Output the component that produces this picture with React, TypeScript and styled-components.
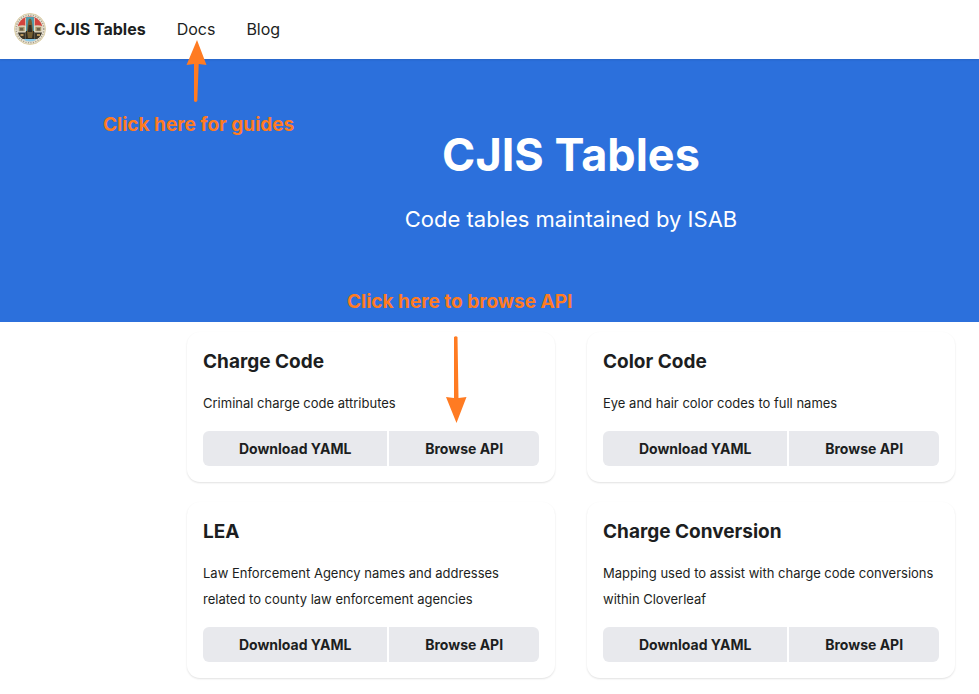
import React from "react";
import styled, { createGlobalStyle } from "styled-components";

const GlobalStyle = createGlobalStyle`
  *, *::before, *::after { box-sizing: border-box; }
  body {
    margin: 0;
    background: #fff;
    color: #1c1e21;
    font-family: Inter, "Liberation Sans", sans-serif;
    font-size: 16px;
  }
`;

const Navbar = styled.nav`
  position: relative;
  z-index: 1;
  display: flex;
  align-items: center;
  gap: 31px;
  height: 59px;
  padding: 0 14px 2px;
  background: #fff;
  box-shadow: 0 1px 2px rgba(0, 0, 0, 0.1);
`;

const Brand = styled.a`
  display: flex;
  align-items: center;
  gap: 8px;
  color: inherit;
  font-weight: 700;
  text-decoration: none;
`;

const NavLink = styled.a`
  color: inherit;
  text-decoration: none;
`;

const Hero = styled.header`
  position: relative;
  padding: 64px 0 87px 163px;
  background: #2c70dc;
  color: #fff;
  text-align: center;
`;

const HeroTitle = styled.h1`
  margin: 0 0 17px;
  font-size: 45px;
  font-weight: 700;
  line-height: 64px;
`;

const HeroSubtitle = styled.p`
  margin: 0;
  font-size: 22px;
  line-height: 31px;
`;

const Note = styled.span<{ $x: number; $y: number }>`
  position: absolute;
  left: ${(p) => p.$x}px;
  top: ${(p) => p.$y}px;
  color: #ff7b22;
  font-size: 19px;
  font-weight: 700;
  line-height: 24px;
  white-space: nowrap;
`;

const Arrow = styled.svg<{ $x: number; $y: number }>`
  position: absolute;
  left: ${(p) => p.$x}px;
  top: ${(p) => p.$y}px;
  fill: #ff7b22;
  pointer-events: none;
`;

const Tables = styled.main`
  position: relative;
  display: grid;
  grid-template-columns: 1fr 1fr;
  gap: 20px 32px;
  padding: 10px 24px 16px 187px;
`;

const Card = styled.article`
  padding: 16px;
  border-radius: 13px;
  background: #fff;
  box-shadow: 0 1px 2px rgba(0, 0, 0, 0.12);
`;

const CardTitle = styled.h3`
  margin: 0 0 14px;
  font-size: 19px;
  font-weight: 700;
  line-height: 28px;
`;

const CardText = styled.p`
  margin: 0 0 15px;
  font-size: 13px;
  line-height: 26px;
`;

const ButtonGroup = styled.div`
  display: flex;
  gap: 2px;
  border-radius: 6px;
  overflow: hidden;
`;

const Button = styled.button`
  flex: 1 1 auto;
  height: 35px;
  padding: 0;
  border: 0;
  background: #e8e9ed;
  color: inherit;
  font: 700 14px Inter, "Liberation Sans", sans-serif;
  cursor: pointer;
`;

const tables = [
  { title: "Charge Code", text: "Criminal charge code attributes" },
  { title: "Color Code", text: "Eye and hair color codes to full names" },
  { title: "LEA", text: "Law Enforcement Agency names and addresses related to county law enforcement agencies" },
  { title: "Charge Conversion", text: "Mapping used to assist with charge code conversions within Cloverleaf" },
];

const Seal = () => (
  <svg width="32" height="32" viewBox="0 0 32 32" aria-hidden="true">
    <defs>
      <clipPath id="seal-inner">
        <circle cx="16" cy="16" r="12.5" />
      </clipPath>
    </defs>
    <circle cx="16" cy="16" r="15.5" fill="#e9e3d3" stroke="#ddd0a8" />
    <circle cx="16" cy="16" r="13.8" fill="none" stroke="#857e70" strokeWidth="1.4" strokeDasharray="1.1 1.4" opacity="0.7" />
    <g clipPath="url(#seal-inner)">
      <path fill="#d5cdb8" d="M3 3h26v26H3z" />
      <path fill="#d2433d" d="M3 3h26v10H3z" />
      <path fill="#d9cdb4" d="M3 13.500q4-2 8.500-1v2H3zM29 13.500q-4-2-8.500-1v2H29z" />
      <path fill="#a39469" d="M5 14h5.500v4.500H5zM21.500 14H27v4.500h-5.500z" />
      <path fill="#6e624a" d="M6 15h3v2.500H6zM23 15h3v2.500h-3z" />
      <path fill="#eee8d8" d="M4 18.500h7v1H4zM21 18.500h7v1h-7z" />
      <path fill="#3b3629" d="M4 19.500h7.500V26H4zM20.500 19.500H28V26h-7.500z" />
      <path fill="#b3925b" d="M6.500 21h3v2h-3zM23 21h3v2h-3z" />
      <path fill="#4f9dad" d="M12 4h8v22h-8z" />
      <path fill="#332d20" d="M11.500 18h9v8h-9z" />
      <path fill="#755e31" d="M14.500 7q1.500-3 3 0l.7 4 .8 8-1 6h-4l-1-6 .8-8z" />
      <path fill="#322e24" d="M14.700 12h2.600l.8 7h-4.200z" />
      <path fill="#8acaea" d="M10 26h12v3H10z" />
    </g>
    <path d="M11.500 5v14M20.500 5v14" stroke="#ede5cf" strokeWidth="0.7" />
  </svg>
);

export default function App() {
  return (
    <>
      <GlobalStyle />
      <Navbar>
        <Brand href="#"><Seal />CJIS Tables</Brand>
        <NavLink href="#docs">Docs</NavLink>
        <NavLink href="#blog">Blog</NavLink>
        <Arrow $x={186} $y={39} width="21" height="64" viewBox="0 0 21 64">
          <path d="M11 1 L20.5 26 L12.7 25 L11.3 62 Q9.5 64 8 62 L8 25 L0.5 26 Z" />
        </Arrow>
      </Navbar>
      <Hero>
        <HeroTitle>CJIS Tables</HeroTitle>
        <HeroSubtitle>Code tables maintained by ISAB</HeroSubtitle>
        <Note $x={103} $y={54}>Click here for guides</Note>
        <Note $x={347} $y={231}>Click here to browse API</Note>
      </Hero>
      <Tables>
        {tables.map((t) => (
          <Card key={t.title}>
            <CardTitle>{t.title}</CardTitle>
            <CardText>{t.text}</CardText>
            <ButtonGroup>
              <Button>Download YAML</Button>
              <Button>Browse API</Button>
            </ButtonGroup>
          </Card>
        ))}
        <Arrow $x={446} $y={14} width="21" height="88" viewBox="0 0 21 88">
          <path d="M8 1 Q10 -0.5 11.5 1 L12.5 62 L20.5 61 L10.5 87 L0 61 L8 62 Z" />
        </Arrow>
      </Tables>
    </>
  );
}
